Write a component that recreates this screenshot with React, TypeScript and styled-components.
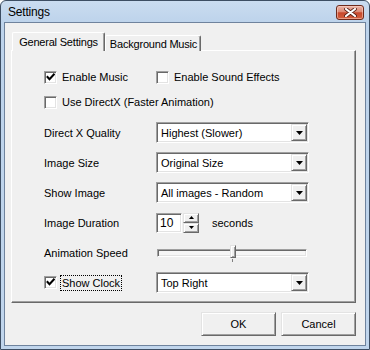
import React from 'react';
import styled, { createGlobalStyle } from 'styled-components';

const Global = createGlobalStyle`
  html, body { margin: 0; padding: 0; background: #ffffff; }
  body { font-family: "Liberation Sans", Arial, sans-serif; font-size: 11px; color: #000; }
  * { box-sizing: border-box; }
`;

const Window = styled.div`
  width: 370px;
  height: 350px;
  display: flex;
  flex-direction: column;
  background: linear-gradient(#cadcf0, #bdd3eb 22px, #c0d5ec);
  border: 1px solid #3d4e63;
  border-radius: 6px 6px 0 0;
  overflow: hidden;
`;

const TitleBar = styled.div`
  height: 21px;
  flex: none;
  display: flex;
  align-items: center;
  justify-content: space-between;
  padding: 0 5px 0 7px;
`;

const Title = styled.span`
  font-size: 12px;
  letter-spacing: -0.2px;
  color: #000;
`;

const CloseButton = styled.div`
  width: 28px;
  height: 15px;
  margin-top: 2px;
  border: 1px solid #6e2a1c;
  border-radius: 3px;
  background: linear-gradient(#eab3a6 0%, #dd8a75 45%, #c8482c 52%, #d2603f 100%);
  box-shadow: inset 0 0 0 1px rgba(255, 220, 210, 0.5);
  display: flex;
  align-items: center;
  justify-content: center;
`;

const Client = styled.div`
  flex: 1;
  margin: 0 3px 3px 3px;
  border: 1px solid #6f839d;
  background: #f0f0f0;
  padding: 9px 9px 0 6px;
  display: flex;
  flex-direction: column;
`;

const TabStrip = styled.div`
  display: flex;
  align-items: flex-end;
  height: 19px;
  padding-left: 1px;
  margin-bottom: -1px;
  position: relative;
  z-index: 1;
`;

const Tab = styled.div<{ $active?: boolean }>`
  height: ${(p) => (p.$active ? 19 : 16)}px;
  width: ${(p) => (p.$active ? 93 : 96)}px;
  background: #f0f0f0;
  border-top: 1px solid #ffffff;
  border-left: 1px solid #ffffff;
  border-right: 1px solid #696969;
  box-shadow: inset -1px 0 0 #a0a0a0;
  border-radius: 2px 2px 0 0;
  display: flex;
  align-items: ${(p) => (p.$active ? 'flex-start' : 'center')};
  justify-content: center;
  padding-top: ${(p) => (p.$active ? 3 : 1)}px;
  padding-left: ${(p) => (p.$active ? 0 : 1)}px;
  font-size: 11px;
  letter-spacing: -0.2px;
  white-space: nowrap;
`;

const Panel = styled.div`
  height: 253px;
  border-top: 1px solid #ffffff;
  border-left: 1px solid #ffffff;
  border-right: 1px solid #696969;
  border-bottom: 1px solid #696969;
  box-shadow: inset -1px -1px 0 #a0a0a0;
  padding: 18px 0 0 32px;
  display: flex;
  flex-direction: column;
`;

const Row = styled.div<{ $h?: number; $mt?: number }>`
  height: ${(p) => p.$h ?? 21}px;
  margin-top: ${(p) => p.$mt ?? 9}px;
  display: flex;
  align-items: center;
`;

const LabelCell = styled.div`
  width: 112px;
  flex: none;
  display: flex;
  align-items: center;
  white-space: nowrap;
`;

const CheckItem = styled.label`
  display: flex;
  align-items: center;
  gap: 5px;
  white-space: nowrap;
`;

const Box = styled.span`
  width: 13px;
  height: 13px;
  flex: none;
  background: #ffffff;
  border-style: solid;
  border-width: 1px;
  border-color: #a0a0a0 #ffffff #ffffff #a0a0a0;
  box-shadow: inset 1px 1px 0 #696969, inset -1px -1px 0 #e3e3e3;
  display: flex;
  align-items: center;
  justify-content: center;
`;

const FocusText = styled.span<{ $focus?: boolean }>`
  padding: 1px 1px;
  border: 1px ${(p) => (p.$focus ? 'dotted #000' : 'solid transparent')};
  margin-left: -2px;
`;

const Combo = styled.div`
  width: 153px;
  height: 21px;
  background: #ffffff;
  border-style: solid;
  border-width: 1px;
  border-color: #a0a0a0 #ffffff #ffffff #a0a0a0;
  box-shadow: inset 1px 1px 0 #696969, inset -1px -1px 0 #e3e3e3;
  display: flex;
  align-items: center;
  padding: 1px;
`;

const ComboText = styled.span`
  flex: 1;
  padding-left: 3px;
  font-size: 11px;
  white-space: nowrap;
`;

const RaisedButton = styled.div`
  background: #f0f0f0;
  border-style: solid;
  border-width: 1px;
  border-color: #e3e3e3 #696969 #696969 #e3e3e3;
  box-shadow: inset 1px 1px 0 #ffffff, inset -1px -1px 0 #a0a0a0;
  display: flex;
  align-items: center;
  justify-content: center;
`;

const DropButton = styled(RaisedButton)`
  width: 16px;
  height: 17px;
  flex: none;
`;

const EditBox = styled.div`
  width: 26px;
  height: 20px;
  background: #ffffff;
  border-style: solid;
  border-width: 1px;
  border-color: #a0a0a0 #ffffff #ffffff #a0a0a0;
  box-shadow: inset 1px 1px 0 #696969, inset -1px -1px 0 #e3e3e3;
  display: flex;
  align-items: center;
  padding-left: 3px;
  font-size: 12px;
`;

const SpinColumn = styled.div`
  display: flex;
  flex-direction: column;
  margin-left: 1px;
`;

const SpinButton = styled(RaisedButton)`
  width: 16px;
  height: 10px;
`;

const Units = styled.span`
  margin-left: 13px;
`;

const SliderWrap = styled.div`
  width: 151px;
  height: 21px;
  position: relative;
  display: flex;
  align-items: center;
  padding-left: 1px;
`;

const Track = styled.div`
  width: 150px;
  height: 8px;
  background: #f6f6f6;
  border-style: solid;
  border-width: 1px;
  border-color: #a0a0a0 #ffffff #ffffff #a0a0a0;
  box-shadow: inset 1px 1px 0 #696969, inset -1px -1px 0 #e3e3e3;
`;

const Thumb = styled(RaisedButton)`
  position: absolute;
  top: 3px;
  width: 6px;
  height: 13px;
`;

const Tick = styled.div`
  position: absolute;
  top: 17px;
  width: 1px;
  height: 3px;
  background: #808080;
`;

const ButtonRow = styled.div`
  display: flex;
  justify-content: flex-end;
  gap: 5px;
  margin-top: 9px;
`;

const PushButton = styled(RaisedButton)`
  width: 75px;
  height: 24px;
  font-size: 11px;
`;

const CheckMark = () => (
  <svg width="9" height="9" viewBox="0 0 9 9">
    <path d="M1.5 4 L3.5 6.2 L7.8 1.5" fill="none" stroke="#000" strokeWidth="2" strokeLinecap="square" />
  </svg>
);

const Check: React.FC<{ checked?: boolean; focus?: boolean; children: React.ReactNode }> = ({ checked, focus, children }) => (
  <CheckItem>
    <Box>{checked && <CheckMark />}</Box>
    <FocusText $focus={focus}>{children}</FocusText>
  </CheckItem>
);

const DownArrow = () => (
  <svg width="7" height="4" viewBox="0 0 7 4">
    <path d="M0 0 H7 L3.5 4 Z" fill="#000" />
  </svg>
);

const SmallArrow: React.FC<{ up?: boolean }> = ({ up }) => (
  <svg width="5" height="3" viewBox="0 0 5 3">
    <path d={up ? 'M2.5 0 L5 3 H0 Z' : 'M0 0 H5 L2.5 3 Z'} fill="#000" />
  </svg>
);

const ComboBox: React.FC<{ value: string }> = ({ value }) => (
  <Combo>
    <ComboText>{value}</ComboText>
    <DropButton>
      <DownArrow />
    </DropButton>
  </Combo>
);

const Slider: React.FC<{ value: number }> = ({ value }) => {
  const left = 1 + Math.round((150 - 6) * value);
  return (
    <SliderWrap>
      <Track />
      <Thumb style={{ left }} />
      <Tick style={{ left: left + 2 }} />
    </SliderWrap>
  );
};

export default function App() {
  return (
    <>
      <Global />
      <Window>
        <TitleBar>
          <Title>Settings</Title>
          <CloseButton>
            <svg width="13" height="9" viewBox="0 0 13 9">
              <path d="M2 1 L11 8 M11 1 L2 8" stroke="#5a2218" strokeWidth="3.8" strokeLinecap="round" />
              <path d="M2 1 L11 8 M11 1 L2 8" stroke="#ffffff" strokeWidth="2.2" strokeLinecap="round" />
            </svg>
          </CloseButton>
        </TitleBar>
        <Client>
          <TabStrip>
            <Tab $active>General Settings</Tab>
            <Tab>Background Music</Tab>
          </TabStrip>
          <Panel>
            <Row $h={16} $mt={0}>
              <LabelCell>
                <Check checked>Enable Music</Check>
              </LabelCell>
              <Check>Enable Sound Effects</Check>
            </Row>
            <Row $h={16} $mt={9}>
              <Check>Use DirectX (Faster Animation)</Check>
            </Row>
            <Row $mt={12}>
              <LabelCell>Direct X Quality</LabelCell>
              <ComboBox value="Highest (Slower)" />
            </Row>
            <Row>
              <LabelCell>Image Size</LabelCell>
              <ComboBox value="Original Size" />
            </Row>
            <Row>
              <LabelCell>Show Image</LabelCell>
              <ComboBox value="All images - Random" />
            </Row>
            <Row>
              <LabelCell>Image Duration</LabelCell>
              <EditBox>10</EditBox>
              <SpinColumn>
                <SpinButton>
                  <SmallArrow up />
                </SpinButton>
                <SpinButton>
                  <SmallArrow />
                </SpinButton>
              </SpinColumn>
              <Units>seconds</Units>
            </Row>
            <Row>
              <LabelCell>Animation Speed</LabelCell>
              <Slider value={0.51} />
            </Row>
            <Row>
              <LabelCell>
                <Check checked focus>
                  Show Clock
                </Check>
              </LabelCell>
              <ComboBox value="Top Right" />
            </Row>
          </Panel>
          <ButtonRow>
            <PushButton>OK</PushButton>
            <PushButton>Cancel</PushButton>
          </ButtonRow>
        </Client>
      </Window>
    </>
  );
}
